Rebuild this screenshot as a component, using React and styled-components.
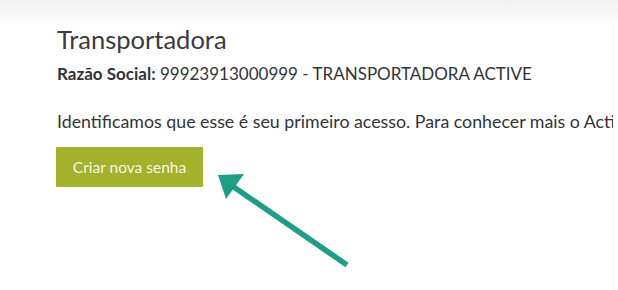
import React from "react";
import styled, { createGlobalStyle } from "styled-components";

const Global = createGlobalStyle`
  html, body { margin: 0; padding: 0; background: #fff; }
  body { font-family: Lato, "Open Sans", sans-serif; overflow: hidden; }
`;

const Page = styled.div`
  width: 618px;
  height: 290px;
  position: relative;
  overflow: hidden;
  background: #fff;
`;

const TopShade = styled.div`
  height: 24px;
  background: linear-gradient(#f0f0f0, #ffffff);
`;

const Content = styled.div`
  width: 614px;
  height: 266px;
  border-right: 1px solid #f6f6f6;
  padding-left: 57px;
  box-sizing: border-box;
  overflow: hidden;
  white-space: nowrap;
`;

const Title = styled.h1`
  margin: 0;
  font-weight: 400;
  font-size: 25.5px;
  line-height: 30px;
  color: #3a3a40;
`;

const Info = styled.p`
  margin: 10px 0 0;
  font-size: 17px;
  line-height: 20px;
  color: #33333a;
`;

const Label = styled.span`
  font-weight: 700;
`;

const Message = styled.p`
  margin: 27px 0 0;
  font-size: 17.8px;
  line-height: 20px;
  color: #33333a;
`;

const Button = styled.button`
  display: block;
  margin-top: 16px;
  margin-left: -1px;
  width: 147px;
  height: 40px;
  border: none;
  border-radius: 1px;
  background: #a3b12b;
  color: #f4f6e4;
  font-family: Lato, "Open Sans", sans-serif;
  font-size: 15.5px;
  cursor: pointer;
`;

const Arrow = styled.svg`
  position: absolute;
  left: 0;
  top: 0;
  pointer-events: none;
`;

export default function App() {
  return (
    <Page>
      <Global />
      <TopShade />
      <Content>
        <Title>Transportadora</Title>
        <Info>
          <Label>Razão Social:</Label> 99923913000999 - TRANSPORTADORA ACTIVE
        </Info>
        <Message>
          Identificamos que esse é seu primeiro acesso. Para conhecer mais o Active
        </Message>
        <Button>Criar nova senha</Button>
      </Content>
      <Arrow width="618" height="290" viewBox="0 0 618 290">
        <line x1="347" y1="265" x2="228" y2="183" stroke="#1c9e89" strokeWidth="5.5" strokeLinecap="butt" />
        <polygon points="218,175 244,174 226,199" fill="#1c9e89" />
      </Arrow>
    </Page>
  );
}
